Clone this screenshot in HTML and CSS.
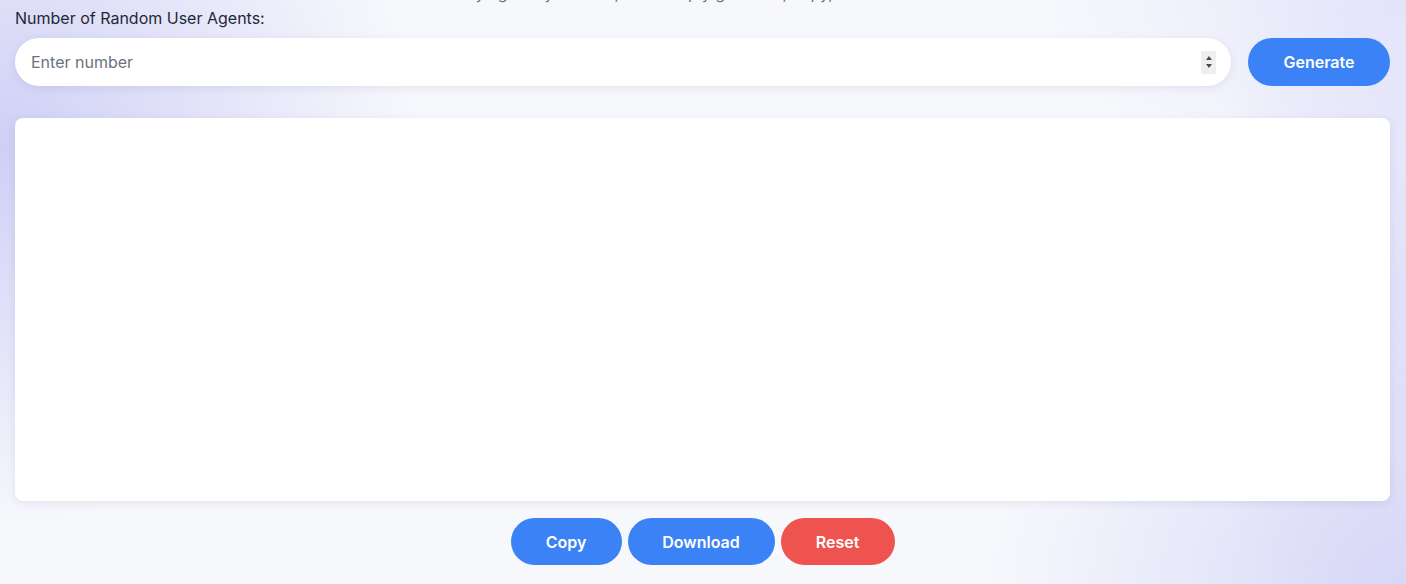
FILE: index.html
```html
<!DOCTYPE html>
<html lang="en">
<head>
<meta charset="utf-8">
<title>Random User Agent Generator</title>
<link rel="stylesheet" href="styles.css">
</head>
<body>
<main class="tool">
  <p class="intro">Choose how many agents you need, then simply generate, copy, download or reset the full list.</p>
  <label class="label" for="count">Number of Random User Agents:</label>
  <div class="row">
    <div class="field">
      <input id="count" class="field-input" type="text" placeholder="Enter number">
      <span class="spin"><span class="up"></span><span class="down"></span></span>
    </div>
    <button class="btn btn-blue btn-generate">Generate</button>
  </div>
  <textarea class="output" aria-label="Output"></textarea>
  <div class="actions">
    <button class="btn btn-blue btn-copy">Copy</button>
    <button class="btn btn-blue btn-download">Download</button>
    <button class="btn btn-red btn-reset">Reset</button>
  </div>
</main>
</body>
</html>
```
FILE: styles.css
```css
html, body {
  margin: 0;
  padding: 0;
  height: 100%;
}
body {
  font-family: Inter, "Noto Sans", sans-serif;
  color: #1f2937;
  background-color: #f7f8fc;
  background-image:
    radial-gradient(ellipse 420px 380px at 0% 25%, rgba(205, 205, 246, 0.95), rgba(205, 205, 246, 0) 100%),
    radial-gradient(ellipse 420px 300px at 100% 100%, rgba(214, 214, 247, 0.95), rgba(214, 214, 247, 0) 100%),
    radial-gradient(ellipse 360px 200px at 100% 0%, rgba(225, 226, 250, 0.8), rgba(225, 226, 250, 0) 100%),
    radial-gradient(ellipse 200px 500px at 100% 50%, rgba(214, 214, 247, 0.7), rgba(214, 214, 247, 0) 100%);
  overflow: hidden;
}
.tool {
  display: flex;
  flex-direction: column;
  padding: 0 16px 0 15px;
}
.intro {
  margin: -19px 0 0;
  font-size: 16px;
  line-height: 24px;
  color: #6b7280;
  text-align: center;
}
.label {
  margin-top: 3px;
  font-size: 16px;
  line-height: 20px;
  color: #1f2937;
}
.row {
  display: flex;
  gap: 17px;
  margin-top: 10px;
}
.field {
  flex: 1;
  display: flex;
  align-items: center;
  height: 48px;
  background: #fff;
  border-radius: 24px;
  box-shadow: 0 2px 8px rgba(60, 60, 120, 0.10);
  padding: 0 15px 0 16px;
}
.field-input {
  flex: 1;
  border: 0;
  outline: none;
  background: transparent;
  font-family: inherit;
  font-size: 16px;
  color: #111827;
  padding: 0;
}
.field-input::placeholder {
  color: #6b7280;
}
.spin {
  display: flex;
  flex-direction: column;
  justify-content: center;
  align-items: center;
  gap: 4px;
  width: 15px;
  height: 23px;
  background: #efefef;
}
.up, .down {
  width: 0;
  height: 0;
  border-left: 3.5px solid transparent;
  border-right: 3.5px solid transparent;
}
.up { border-bottom: 4px solid #4b4b4b; }
.down { border-top: 4px solid #4b4b4b; }
.btn {
  border: 0;
  border-radius: 24px;
  font-family: inherit;
  font-weight: 600;
  font-size: 16px;
  color: #fff;
  cursor: pointer;
}
.btn-blue { background: #3b82f6; }
.btn-red { background: #ef5350; }
.btn-generate {
  width: 142px;
  height: 48px;
}
.output {
  margin-top: 32px;
  height: 383px;
  border: 0;
  border-radius: 8px;
  background: #fff;
  box-shadow: 0 2px 8px rgba(60, 60, 120, 0.10);
  resize: none;
  outline: none;
  padding: 12px;
  box-sizing: border-box;
  font-family: inherit;
}
.actions {
  display: flex;
  justify-content: center;
  gap: 6px;
  margin-top: 17px;
}
.actions .btn {
  height: 47px;
}
.btn-copy { width: 111px; }
.btn-download { width: 147px; }
.btn-reset { width: 114px; }
```
